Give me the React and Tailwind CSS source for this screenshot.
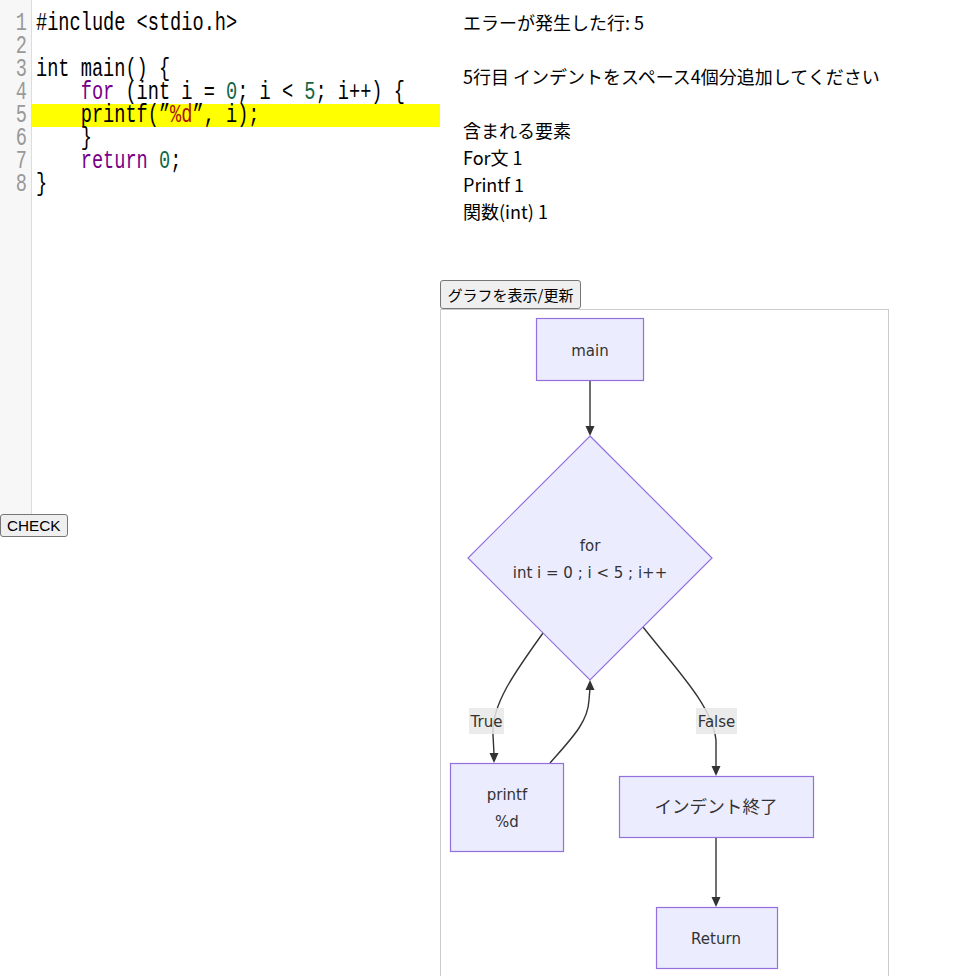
import React from "react";

const tokenClass = {
  kw: "text-[#770088]",
  num: "text-[#116644]",
  str: "text-[#aa1111]",
  none: "text-black",
};

const lines = [
  [{ t: "#include <stdio.h>" }],
  [],
  [{ t: "int main() {" }],
  [
    { t: "    " },
    { t: "for", c: "kw" },
    { t: " (int i = " },
    { t: "0", c: "num" },
    { t: "; i < " },
    { t: "5", c: "num" },
    { t: "; i++) {" },
  ],
  [{ t: "    printf(\u201d" }, { t: "%d", c: "str" }, { t: "\u201d, i);" }],
  [{ t: "    }" }],
  [{ t: "    " }, { t: "return", c: "kw" }, { t: " " }, { t: "0", c: "num" }, { t: ";" }],
  [{ t: "}" }],
];

function Editor() {
  return (
    <div className="flex w-[440px] h-[514px] font-['Liberation_Mono',monospace] text-[25px] overflow-hidden">
      <div className="w-[32px] shrink-0 bg-[#f7f7f7] border-r border-[#dddddd] pt-[12px]">
        {lines.map((_, i) => (
          <div key={i} className="h-[23px] leading-[23px] text-right pr-[4px] text-[#999999]">
            <span className="inline-block origin-right scale-x-[0.745]">{i + 1}</span>
          </div>
        ))}
      </div>
      <div className="w-[408px] min-w-0 shrink-0 overflow-hidden pt-[12px]">
        {lines.map((toks, i) => (
          <div
            key={i}
            className={
              i === 4
                ? "w-[408px] h-[23px] leading-[23px] pl-[4px] whitespace-pre bg-[#ffff00]"
                : "w-[408px] h-[23px] leading-[23px] pl-[4px] whitespace-pre"
            }
          >
            <span className="inline-block origin-left scale-x-[0.745] whitespace-pre">
              {toks.map((tk, j) => (
                <span key={j} className={tokenClass[tk.c || "none"]}>
                  {tk.t}
                </span>
              ))}
            </span>
          </div>
        ))}
      </div>
    </div>
  );
}

function Arrow({ x, y, dir = "down" }) {
  const pts =
    dir === "down"
      ? `${x},${y} ${x - 4.5},${y - 10} ${x + 4.5},${y - 10}`
      : `${x},${y} ${x - 4.5},${y + 10} ${x + 4.5},${y + 10}`;
  return <polygon points={pts} fill="#333333" />;
}

function Graph() {
  const node = { fill: "#ECECFF", stroke: "#9370DB", strokeWidth: 1.2 };
  const txt = {
    fill: "#333333",
    fontSize: 15,
    textAnchor: "middle",
    dominantBaseline: "central",
    fontFamily: "'DejaVu Sans', 'Noto Sans CJK JP', sans-serif",
  };
  const edge = { fill: "none", stroke: "#333333", strokeWidth: 1.4 };
  return (
    <svg width="447" height="700" viewBox="441 310 447 700" className="block">
      {/* edges */}
      <path d="M590,380 L590,428" {...edge} />
      <Arrow x={590} y={436} />
      <path d="M543,633 C515,672 491,705 493,735 L494,754" {...edge} />
      <Arrow x={494} y={763} />
      <path d="M550,763 C572,738 588,722 589,700 L590,688" {...edge} />
      <path d="M643,627 C675,668 712,705 716,740 L716,767" {...edge} />
      <Arrow x={716} y={776} />
      <path d="M716,837 L716,898" {...edge} />
      <Arrow x={716} y={907} />

      {/* nodes */}
      <rect x="536.5" y="318.5" width="107" height="62" {...node} />
      <text x="590" y="351" {...txt}>main</text>

      <polygon points="590,436 712,558 590,680 468,558" {...node} />
      <Arrow x={590} y={680} dir="up" />
      <text x="590" y="546" {...txt}>for</text>
      <text x="590" y="573" {...txt}>int i = 0 ; i &lt; 5 ; i++</text>

      <rect x="450.5" y="763.5" width="113" height="88" {...node} />
      <text x="507" y="795" {...txt}>printf</text>
      <text x="507" y="822" {...txt}>%d</text>

      <rect x="619.5" y="776.5" width="194" height="61" {...node} />
      <text x="716" y="807" {...txt} fontSize="17.6">インデント終了</text>

      <rect x="656.5" y="907.5" width="121" height="61" {...node} />
      <text x="716" y="939" {...txt}>Return</text>

      {/* labels */}
      <rect x="469" y="708" width="35" height="26" fill="rgba(232,232,232,0.85)" />
      <text x="486.5" y="722" {...txt}>True</text>
      <rect x="696" y="708" width="41" height="26" fill="rgba(232,232,232,0.85)" />
      <text x="716.5" y="722" {...txt}>False</text>
    </svg>
  );
}

export default function App() {
  return (
    <div className="flex w-[953px] min-h-[976px] bg-white overflow-hidden">
      <div className="w-[440px] shrink-0 flex flex-col items-start">
        <Editor />
        <button className="h-[23px] px-[6px] bg-[#efefef] border border-[#767676] rounded-[3px] text-[15.3px] leading-none text-black font-['Liberation_Sans',Arial,sans-serif]">
          CHECK
        </button>
      </div>
      <div className="flex flex-col items-start">
        <div className="pl-[23px] pt-[9px] text-[18px] leading-[27px] text-black font-['Noto_Sans_CJK_JP',sans-serif]">
          <div>エラーが発生した行: 5</div>
          <div>&nbsp;</div>
          <div>5行目 インデントをスペース4個分追加してください</div>
          <div>&nbsp;</div>
          <div>含まれる要素</div>
          <div>For文 1</div>
          <div>Printf 1</div>
          <div>関数(int) 1</div>
        </div>
        <button className="mt-[55px] h-[29px] w-[141px] bg-[#efefef] border border-[#767676] rounded-[3px] text-[15px] leading-none text-black font-['Noto_Sans_CJK_JP',sans-serif] flex items-center justify-center">
          グラフを表示/更新
        </button>
        <div className="w-[449px] h-[700px] border border-[#cccccc]">
          <Graph />
        </div>
      </div>
    </div>
  );
}
